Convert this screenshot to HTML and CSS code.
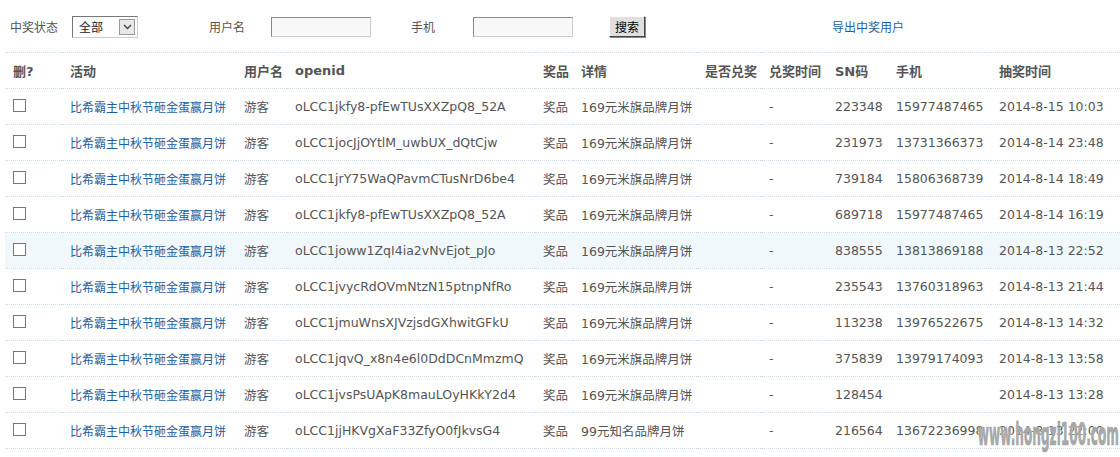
FILE: index.html
```html
<!DOCTYPE html>
<html lang="zh-CN">
<head>
    <meta charset="UTF-8">
    <title>中奖用户</title>
    <link rel="stylesheet" href="styles.css">
</head>
<body>
    <div class="filter">
        <div class="field f1">
            <span class="label">中奖状态</span>
            <span class="select"><span class="select-text">全部</span><span class="select-btn"><svg width="9" height="6" viewBox="0 0 9 6"><path d="M1 1 L4.5 4.5 L8 1" fill="none" stroke="#444" stroke-width="1.4"/></svg></span></span>
        </div>
        <div class="field f2">
            <span class="label">用户名</span>
            <input class="text" type="text">
        </div>
        <div class="field f3">
            <span class="label">手机</span>
            <input class="text" type="text">
        </div>
        <div class="field f4">
            <button class="btn">搜索</button>
        </div>
        <a class="export" href="#">导出中奖用户</a>
    </div>

    <table class="list">
        <colgroup>
            <col style="width:57px">
            <col style="width:174px">
            <col style="width:51px">
            <col style="width:248px">
            <col style="width:38px">
            <col style="width:124px">
            <col style="width:64px">
            <col style="width:66px">
            <col style="width:61px">
            <col style="width:103px">
            <col style="width:129px">
        </colgroup>
        <thead>
            <tr>
                <th>删?</th>
                <th>活动</th>
                <th>用户名</th>
                <th>openid</th>
                <th>奖品</th>
                <th>详情</th>
                <th>是否兑奖</th>
                <th>兑奖时间</th>
                <th>SN码</th>
                <th>手机</th>
                <th>抽奖时间</th>
            </tr>
        </thead>
        <tbody>
            <tr>
                <td><input type="checkbox" class="chk"></td>
                <td><a href="#">比希霸主中秋节砸金蛋赢月饼</a></td>
                <td>游客</td>
                <td>oLCC1jkfy8-pfEwTUsXXZpQ8_52A</td>
                <td>奖品</td>
                <td>169元米旗品牌月饼</td>
                <td></td>
                <td>-</td>
                <td>223348</td>
                <td>15977487465</td>
                <td>2014-8-15 10:03</td>
            </tr>
            <tr>
                <td><input type="checkbox" class="chk"></td>
                <td><a href="#">比希霸主中秋节砸金蛋赢月饼</a></td>
                <td>游客</td>
                <td>oLCC1jocJjOYtlM_uwbUX_dQtCjw</td>
                <td>奖品</td>
                <td>169元米旗品牌月饼</td>
                <td></td>
                <td>-</td>
                <td>231973</td>
                <td>13731366373</td>
                <td>2014-8-14 23:48</td>
            </tr>
            <tr>
                <td><input type="checkbox" class="chk"></td>
                <td><a href="#">比希霸主中秋节砸金蛋赢月饼</a></td>
                <td>游客</td>
                <td>oLCC1jrY75WaQPavmCTusNrD6be4</td>
                <td>奖品</td>
                <td>169元米旗品牌月饼</td>
                <td></td>
                <td>-</td>
                <td>739184</td>
                <td>15806368739</td>
                <td>2014-8-14 18:49</td>
            </tr>
            <tr>
                <td><input type="checkbox" class="chk"></td>
                <td><a href="#">比希霸主中秋节砸金蛋赢月饼</a></td>
                <td>游客</td>
                <td>oLCC1jkfy8-pfEwTUsXXZpQ8_52A</td>
                <td>奖品</td>
                <td>169元米旗品牌月饼</td>
                <td></td>
                <td>-</td>
                <td>689718</td>
                <td>15977487465</td>
                <td>2014-8-14 16:19</td>
            </tr>
            <tr class="hover">
                <td><input type="checkbox" class="chk"></td>
                <td><a href="#">比希霸主中秋节砸金蛋赢月饼</a></td>
                <td>游客</td>
                <td>oLCC1joww1ZqI4ia2vNvEjot_pJo</td>
                <td>奖品</td>
                <td>169元米旗品牌月饼</td>
                <td></td>
                <td>-</td>
                <td>838555</td>
                <td>13813869188</td>
                <td>2014-8-13 22:52</td>
            </tr>
            <tr>
                <td><input type="checkbox" class="chk"></td>
                <td><a href="#">比希霸主中秋节砸金蛋赢月饼</a></td>
                <td>游客</td>
                <td>oLCC1jvycRdOVmNtzN15ptnpNfRo</td>
                <td>奖品</td>
                <td>169元米旗品牌月饼</td>
                <td></td>
                <td>-</td>
                <td>235543</td>
                <td>13760318963</td>
                <td>2014-8-13 21:44</td>
            </tr>
            <tr>
                <td><input type="checkbox" class="chk"></td>
                <td><a href="#">比希霸主中秋节砸金蛋赢月饼</a></td>
                <td>游客</td>
                <td>oLCC1jmuWnsXJVzjsdGXhwitGFkU</td>
                <td>奖品</td>
                <td>169元米旗品牌月饼</td>
                <td></td>
                <td>-</td>
                <td>113238</td>
                <td>13976522675</td>
                <td>2014-8-13 14:32</td>
            </tr>
            <tr>
                <td><input type="checkbox" class="chk"></td>
                <td><a href="#">比希霸主中秋节砸金蛋赢月饼</a></td>
                <td>游客</td>
                <td>oLCC1jqvQ_x8n4e6l0DdDCnMmzmQ</td>
                <td>奖品</td>
                <td>169元米旗品牌月饼</td>
                <td></td>
                <td>-</td>
                <td>375839</td>
                <td>13979174093</td>
                <td>2014-8-13 13:58</td>
            </tr>
            <tr>
                <td><input type="checkbox" class="chk"></td>
                <td><a href="#">比希霸主中秋节砸金蛋赢月饼</a></td>
                <td>游客</td>
                <td>oLCC1jvsPsUApK8mauLOyHKkY2d4</td>
                <td>奖品</td>
                <td>169元米旗品牌月饼</td>
                <td></td>
                <td>-</td>
                <td>128454</td>
                <td></td>
                <td>2014-8-13 13:28</td>
            </tr>
            <tr>
                <td><input type="checkbox" class="chk"></td>
                <td><a href="#">比希霸主中秋节砸金蛋赢月饼</a></td>
                <td>游客</td>
                <td>oLCC1jjHKVgXaF33ZfyO0fJkvsG4</td>
                <td>奖品</td>
                <td>99元知名品牌月饼</td>
                <td></td>
                <td>-</td>
                <td>216564</td>
                <td>13672236998</td>
                <td>2014-8-13 22:00</td>
            </tr>
        </tbody>
    </table>

    <div class="watermark">www.hongzi100.com</div>
</body>
</html>
```

FILE: styles.css
```css
* {
    margin: 0;
    padding: 0;
    box-sizing: border-box;
}

body {
    background: #fff;
    color: #555;
    font-family: "DejaVu Sans", "Noto Sans CJK SC", sans-serif;
    font-size: 12px;
    position: relative;
    overflow: hidden;
    height: 457px;
}

a {
    color: #1f5f9f;
    text-decoration: none;
}

/* filter bar */
.filter {
    display: flex;
    align-items: center;
    height: 52px;
    padding-left: 10px;
    padding-top: 1px;
}

.field {
    display: flex;
    align-items: center;
}

.f1 { width: 199px; }
.f2 { width: 202px; }
.f3 { width: 198px; }
.f4 { width: 223px; }

.label {
    width: 62px;
    font-family: "Noto Sans CJK SC", sans-serif;
}

.select {
    display: flex;
    align-items: center;
    width: 66px;
    height: 22px;
    border: 1px solid;
    border-color: #777 #ccc #ccc #777;
    background: #fff;
    padding: 0 2px 0 6px;
}

.select-text {
    flex: 1;
    font-family: "Noto Sans CJK SC", sans-serif;
    font-size: 12px;
    color: #222;
}

.select-btn {
    display: flex;
    align-items: center;
    justify-content: center;
    width: 16px;
    height: 16px;
    background: #e8e8e8;
    border: 1px solid #999;
}

.text {
    width: 100px;
    height: 20px;
    border: 1px solid;
    border-color: #888 #ccc #ccc #888;
    background: #f8f8f8;
    outline: none;
}

.btn {
    height: 21px;
    padding: 0 5px;
    font-family: "Noto Sans CJK SC", sans-serif;
    font-size: 12px;
    color: #000;
    background: #e0e0e0;
    border: 1px solid;
    border-color: #fff #444 #444 #fff;
    box-shadow: 1px 1px 0 #888;
}

.export {
    font-family: "Noto Sans CJK SC", sans-serif;
}

/* list */
.list {
    margin-left: 5px;
    width: 1115px;
    table-layout: fixed;
    border-collapse: collapse;
}

.list th,
.list td {
    height: 36px;
    padding: 0 0 0 8px;
    text-align: left;
    white-space: nowrap;
    overflow: hidden;
    border-top: 1px dotted #c6def0;
    border-bottom: 1px dotted #c6def0;
}

.list td {
    font-size: 12.5px;
}

.list th {
    font-size: 13px;
    font-weight: bold;
    color: #555;
}

.list td a {
    font-family: "Noto Sans CJK SC", sans-serif;
    font-size: 12px;
}

.list tr.hover td {
    background: #f1f8fc;
}

.chk {
    appearance: none;
    display: block;
    width: 13px;
    height: 13px;
    border: 1px solid #777;
    background: #fff;
    margin-top: -3px;
}

.watermark {
    position: absolute;
    right: 1px;
    top: 414px;
    font-family: "DejaVu Sans Condensed", "DejaVu Sans", sans-serif;
    font-weight: bold;
    font-size: 13.5px;
    color: rgba(160, 160, 160, 0.92);
    -webkit-text-stroke: 0.3px rgba(160, 160, 160, 0.92);
    transform: scaleY(2.4);
    transform-origin: right top;
    white-space: nowrap;
    text-shadow: 0 0 1px #fff;
}
```
